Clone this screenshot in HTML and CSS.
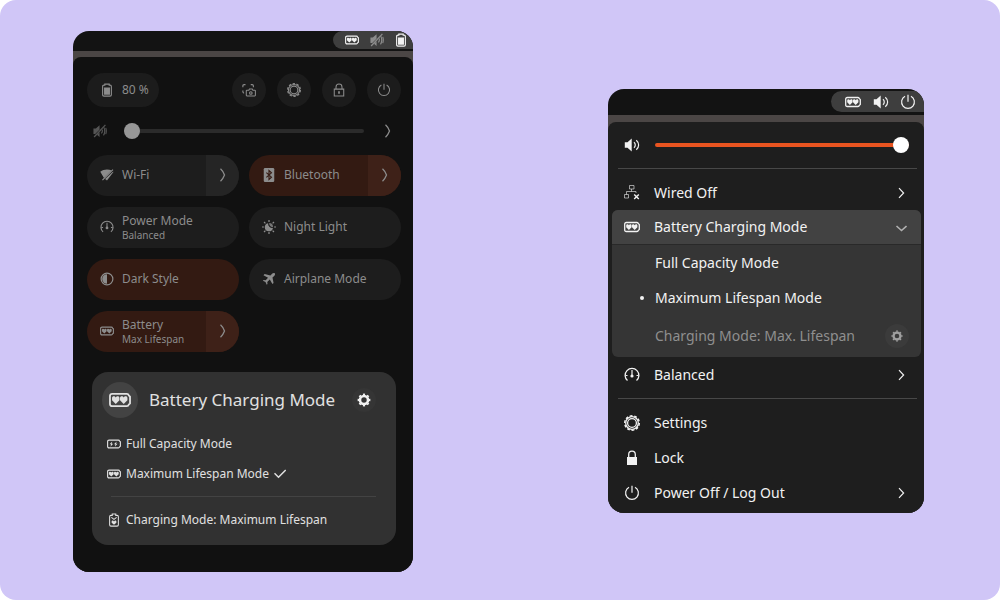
FILE: index.html
```html
<!DOCTYPE html>
<html lang="en">
<head>
<meta charset="utf-8">
<meta name="viewport" content="width=device-width, initial-scale=1">
<title>Battery Charging Mode</title>
<link rel="stylesheet" href="styles.css">
</head>
<body>
<svg class="sprite" aria-hidden="true">
  <symbol id="hearts" viewBox="0 0 16 16">
    <path d="M2.300 3.500h10.700c.9 0 1.200.5 1.400 1.200l.9.800v5l-.9.800c-.2.700-.5 1.200-1.400 1.200H2.300c-1 0-1.600-.6-1.600-1.600V5.100c0-1 .6-1.600 1.600-1.600z" fill="none" stroke="currentColor" stroke-width="1.300"/>
    <path d="M4.900 10.900 2.200 8.200V6.600c0-.8.6-1.300 1.300-1.300.6 0 1.100.4 1.400.9.3-.5.8-.9 1.400-.9.7 0 1.300.5 1.300 1.300v1.600zM10.700 10.900 8 8.200V6.600c0-.8.6-1.300 1.300-1.300.6 0 1.100.4 1.400.9.3-.5.8-.9 1.400-.9.7 0 1.300.5 1.300 1.300v1.600z" fill="currentColor"/>
  </symbol>
  <symbol id="bolts" viewBox="0 0 16 16">
    <path d="M2.300 3.500h10.700c.9 0 1.200.5 1.400 1.200l.9.800v5l-.9.800c-.2.700-.5 1.200-1.400 1.200H2.300c-1 0-1.600-.6-1.600-1.600V5.100c0-1 .6-1.600 1.600-1.600z" fill="none" stroke="currentColor" stroke-width="1.300"/>
    <path d="M6 5 3 8.400h1.700L4 11.200l3-3.600H5.300zM11 5 8 8.400h1.700L9 11.200l3-3.600h-1.700z" fill="currentColor"/>
  </symbol>
  <symbol id="battery" viewBox="0 0 16 16">
    <path d="M5.500 1.300h5v1.200h1c1 0 1.500.5 1.500 1.500v9.500c0 1-.5 1.500-1.500 1.500h-7C3.500 15 3 14.500 3 13.500V4c0-1 .5-1.500 1.500-1.500h1z" fill="none" stroke="currentColor" stroke-width="1.300"/>
    <path d="M4.600 5.200h6.800v8.200H4.600z" fill="currentColor"/>
  </symbol>
  <symbol id="battery-heart" viewBox="0 0 16 16">
    <path d="M6 1.200h4v1.500h1.500c1 0 1.500.5 1.500 1.500v9.300c0 1-.5 1.500-1.500 1.500h-7C3.500 15 3 14.500 3 13.500V4.200c0-1 .5-1.500 1.500-1.500H6z" fill="none" stroke="currentColor" stroke-width="1.200"/>
    <path d="M5 5l3 2.300L11 5" fill="none" stroke="currentColor" stroke-width="1.200"/>
    <path d="M8 13.500 5.300 11V9.800c0-.7.500-1.100 1.200-1.100.6 0 1.100.4 1.500.9.400-.5.9-.9 1.500-.9.700 0 1.200.4 1.200 1.100V11z" fill="currentColor"/>
  </symbol>
  <symbol id="volume" viewBox="0 0 16 16">
    <path d="M.8 5.300h2.700L7.700 1.600v12.800l-4.200-3.700H.8z" fill="currentColor"/>
    <path d="M10 5.300c1.700 1.500 1.700 3.900 0 5.400M12.300 3.200c3.100 2.700 3.100 6.900 0 9.600" fill="none" stroke="currentColor" stroke-width="1.200"/>
  </symbol>
  <symbol id="muted" viewBox="0 0 16 16">
    <path d="M.5 5.200h2.700l4.300-3.700v5.200L2.500 11.500H.5zM4.500 12.300l3-3v5.500z" fill="currentColor"/>
    <path d="M9.500 10.800c1.200-1.200 1.500-3 .8-4.500M12 13c1.800-2.400 1.800-6.800.3-9.300M14.600 11.500c.8-2.300.8-4.700 0-7" fill="none" stroke="currentColor" stroke-width="1.300"/>
    <path d="M14.200 1 1.300 14.800" stroke="currentColor" stroke-width="1.500"/>
  </symbol>
  <symbol id="power" viewBox="0 0 16 16">
    <path d="M5 2.300a6.400 6.400 0 1 0 6 0M8 .8v7" fill="none" stroke="currentColor" stroke-width="1.200"/>
  </symbol>
  <symbol id="gear-line" viewBox="0 0 16 16">
    <circle cx="8" cy="8" r="6.300" fill="none" stroke="currentColor" stroke-width="1.300"/>
    <circle cx="8" cy="8" r="7.300" fill="none" stroke="currentColor" stroke-width="1.400" pathLength="20" stroke-dasharray="1.200 .8"/>
    <circle cx="8" cy="8" r="4.400" fill="none" stroke="currentColor" stroke-width="1.300"/>
  </symbol>
  <symbol id="gear" viewBox="0 0 16 16">
    <circle cx="8" cy="8" r="4.600" fill="none" stroke="currentColor" stroke-width="3"/>
    <circle cx="8" cy="8" r="6.500" fill="none" stroke="currentColor" stroke-width="1.600" pathLength="16" stroke-dasharray="1 1" stroke-dashoffset=".5"/>
  </symbol>
  <symbol id="lock-line" viewBox="0 0 16 16">
    <path d="M2.600 7h10.800v7.800H2.600zM4.600 7V4.500a3.400 3.400 0 0 1 6.800 0V7" fill="none" stroke="currentColor" stroke-width="1.200"/>
    <path d="M7 9.500h2v2.700H7z" fill="currentColor"/>
  </symbol>
  <symbol id="lock" viewBox="0 0 16 16">
    <path d="M3 7h10v8H3z" fill="currentColor"/>
    <path d="M4.700 7V4.500a3.300 3.300 0 0 1 6.600 0V7" fill="none" stroke="currentColor" stroke-width="1.300"/>
  </symbol>
  <symbol id="capture" viewBox="0 0 16 16">
    <path d="M1 4.800V3.200Q1 1.800 2.400 1.800H4M10 1.800h1.600q1.400 0 1.400 1.400v1.600M1 8.500v1.600q0 1.400 1.400 1.400" fill="none" stroke="currentColor" stroke-width="1.300"/>
    <path d="M5.600 8.200h2.200l.7-1.400h3.200l.7 1.400h2.200q.7 0 .7.700v5.200q0 .7-.7.700h-9q-.7 0-.7-.7V8.900q0-.7.700-.7z" fill="none" stroke="currentColor" stroke-width="1.200"/>
    <circle cx="10.100" cy="11.400" r="1.500" fill="none" stroke="currentColor" stroke-width="1.200"/>
  </symbol>
  <symbol id="wifi-off" viewBox="0 0 16 16">
    <path d="M.3 4.200C4 1.200 9.500 1 13 2.700L4.400 11.200zM14.300 4.500l1.300-.2L8 14.300 5.800 12.600zM2.300 13.400 14.300 1.400l1 1L3.300 14.400z" fill="currentColor"/>
  </symbol>
  <symbol id="bluetooth" viewBox="0 0 16 16">
    <rect x="2" y="0" width="12" height="16" rx="1.500" fill="currentColor"/>
    <path d="m5 5.300 5.800 5.200L8 13V3l2.800 2.500L5 10.700" fill="none" stroke="#351b13" stroke-width="1.300"/>
  </symbol>
  <symbol id="gauge" viewBox="0 0 16 16">
    <path d="M3.500 13.600a6.900 6.900 0 1 1 9 0" fill="none" stroke="currentColor" stroke-width="1.300"/>
    <path d="M1.500 8.500h2M12.500 8.500h2M8 3v5" fill="none" stroke="currentColor" stroke-width="1.200"/>
    <circle cx="8" cy="9" r="1.600" fill="currentColor"/>
  </symbol>
  <symbol id="night" viewBox="0 0 16 16">
    <path d="M7 3.600A4.700 4.700 0 1 0 12.500 9 4.800 4.800 0 0 1 7 3.600z" fill="currentColor"/>
    <path d="M8.200 3.500a4.600 4.600 0 0 1 4.400 4.600c-2.500.4-4.800-2-4.400-4.600z" fill="currentColor" opacity=".8"/>
    <path d="M8 0v2.200M8 13.800V16M0 8h2.200M13.800 8H16M2.300 2.300l1.600 1.600M12.100 12.100l1.600 1.600M2.300 13.700l1.600-1.600M12.100 3.900l1.600-1.600" stroke="currentColor" stroke-width="1.400"/>
  </symbol>
  <symbol id="contrast" viewBox="0 0 16 16">
    <circle cx="8" cy="8" r="6.700" fill="none" stroke="currentColor" stroke-width="1.400"/>
    <path d="M8 2.500a5.500 5.500 0 0 0 0 11z" fill="currentColor"/>
  </symbol>
  <symbol id="plane" viewBox="0 0 16 16">
    <path d="M14.500 1.500c-.8-.8-2-.4-2.700.3L9.600 4 3 2.300 1.700 3.600l5.200 3-2.700 2.900-2.300-.3-.9.900 3 1.400 1.400 3 .9-.9-.3-2.300 2.900-2.700 3 5.200 1.300-1.300L12 6.400l2.200-2.200c.7-.7 1.100-1.900.3-2.700z" fill="currentColor"/>
  </symbol>
  <symbol id="wired-off" viewBox="0 0 16 16">
    <path d="M5.500.5h4.500v3.500H5.500zM.5 9.500h4v3.500h-4zM7.500 4v2.500M2.500 9.500v-3h9.500v1.500" fill="none" stroke="currentColor" opacity=".6"/>
    <path d="m10.200 9.400 4.600 4.600M14.800 9.400 10.200 14" stroke="currentColor" stroke-width="1.400"/>
  </symbol>
  <symbol id="chevron" viewBox="0 0 12 12">
    <path d="M4 1.200 8.600 6 4 10.800" fill="none" stroke="currentColor" stroke-width="1.200"/>
  </symbol>
  <symbol id="chevron-tall" viewBox="0 0 8 14">
    <path d="M1.500.8Q4 3 5.500 7 4 11 1.500 13.200" fill="none" stroke="currentColor" stroke-width="1.300"/>
  </symbol>
  <symbol id="chevron-down" viewBox="0 0 12 12">
    <path d="M1.500 5 6.500 9.500l5-4.500" fill="none" stroke="currentColor" stroke-width="1.600"/>
  </symbol>
  <symbol id="check" viewBox="0 0 12 12">
    <path d="m.5 5.300 4 4 7.200-7.400" fill="none" stroke="currentColor" stroke-width="1.500"/>
  </symbol>
</svg>

<main class="stage">
  <section class="device quick" aria-label="Quick settings">
    <header class="topbar">
      <div class="status">
        <svg class="icon"><use href="#hearts"/></svg>
        <svg class="icon faint"><use href="#muted"/></svg>
        <svg class="icon"><use href="#battery"/></svg>
      </div>
    </header>
    <div class="backdrop">
      <div class="panel">
        <div class="system">
          <button class="charge" type="button"><svg class="icon"><use href="#battery"/></svg>80 %</button>
          <div class="actions">
            <button class="round" type="button" aria-label="Screenshot"><svg class="icon"><use href="#capture"/></svg></button>
            <button class="round" type="button" aria-label="Settings"><svg class="icon"><use href="#gear-line"/></svg></button>
            <button class="round" type="button" aria-label="Lock"><svg class="icon"><use href="#lock-line"/></svg></button>
            <button class="round" type="button" aria-label="Power"><svg class="icon"><use href="#power"/></svg></button>
          </div>
        </div>
        <div class="volume">
          <svg class="icon"><use href="#muted"/></svg>
          <input class="slider" type="range" min="0" max="100" value="0" aria-label="Volume">
          <button class="plain" type="button" aria-label="Sound output"><svg class="tall"><use href="#chevron-tall"/></svg></button>
        </div>
        <div class="tiles">
          <div class="tile">
            <button class="toggle" type="button"><svg class="icon"><use href="#wifi-off"/></svg><span class="label">Wi-Fi</span></button>
            <button class="more" type="button" aria-label="Wi-Fi menu"><svg class="tall"><use href="#chevron-tall"/></svg></button>
          </div>
          <div class="tile active">
            <button class="toggle" type="button"><svg class="icon"><use href="#bluetooth"/></svg><span class="label">Bluetooth</span></button>
            <button class="more" type="button" aria-label="Bluetooth menu"><svg class="tall"><use href="#chevron-tall"/></svg></button>
          </div>
          <div class="tile">
            <button class="toggle" type="button"><svg class="icon"><use href="#gauge"/></svg><span class="label">Power Mode<small>Balanced</small></span></button>
          </div>
          <div class="tile">
            <button class="toggle" type="button"><svg class="icon"><use href="#night"/></svg><span class="label">Night Light</span></button>
          </div>
          <div class="tile active">
            <button class="toggle" type="button"><svg class="icon"><use href="#contrast"/></svg><span class="label">Dark Style</span></button>
          </div>
          <div class="tile">
            <button class="toggle" type="button"><svg class="icon"><use href="#plane"/></svg><span class="label">Airplane Mode</span></button>
          </div>
          <div class="tile active">
            <button class="toggle" type="button"><svg class="icon"><use href="#hearts"/></svg><span class="label">Battery<small>Max Lifespan</small></span></button>
            <button class="more" type="button" aria-label="Battery menu"><svg class="tall"><use href="#chevron-tall"/></svg></button>
          </div>
        </div>
        <div class="card">
          <div class="card-head">
            <span class="badge"><svg><use href="#hearts"/></svg></span>
            <h2>Battery Charging Mode</h2>
            <button class="config" type="button" aria-label="Preferences"><svg><use href="#gear"/></svg></button>
          </div>
          <div class="choices">
            <button class="choice" type="button"><svg class="icon"><use href="#bolts"/></svg>Full Capacity Mode</button>
            <button class="choice" type="button"><svg class="icon"><use href="#hearts"/></svg>Maximum Lifespan Mode<svg class="check"><use href="#check"/></svg></button>
          </div>
          <hr>
          <p class="choice"><svg class="icon"><use href="#battery-heart"/></svg>Charging Mode: Maximum Lifespan</p>
        </div>
      </div>
    </div>
  </section>

  <section class="device menu" aria-label="System menu">
    <header class="topbar">
      <div class="status">
        <svg class="icon"><use href="#hearts"/></svg>
        <svg class="icon"><use href="#volume"/></svg>
        <svg class="icon"><use href="#power"/></svg>
      </div>
    </header>
    <div class="backdrop">
      <div class="panel">
        <div class="volume">
          <svg class="icon"><use href="#volume"/></svg>
          <input class="slider" type="range" min="0" max="100" value="100" aria-label="Volume">
        </div>
        <hr>
        <button class="row" type="button"><svg class="icon"><use href="#wired-off"/></svg><span>Wired Off</span><svg class="arrow"><use href="#chevron"/></svg></button>
        <div class="group">
          <button class="row open" type="button" aria-expanded="true"><svg class="icon"><use href="#hearts"/></svg><span>Battery Charging Mode</span><svg class="arrow"><use href="#chevron-down"/></svg></button>
          <button class="option" type="button"><i class="dot"></i>Full Capacity Mode</button>
          <button class="option selected" type="button"><i class="dot"></i>Maximum Lifespan Mode</button>
          <div class="option info"><i class="dot"></i><span>Charging Mode: Max. Lifespan</span>
            <button class="config" type="button" aria-label="Preferences"><svg><use href="#gear"/></svg></button>
          </div>
        </div>
        <button class="row" type="button"><svg class="icon"><use href="#gauge"/></svg><span>Balanced</span><svg class="arrow"><use href="#chevron"/></svg></button>
        <hr>
        <button class="row" type="button"><svg class="icon"><use href="#gear-line"/></svg><span>Settings</span></button>
        <button class="row" type="button"><svg class="icon"><use href="#lock"/></svg><span>Lock</span></button>
        <button class="row" type="button"><svg class="icon"><use href="#power"/></svg><span>Power Off / Log Out</span><svg class="arrow"><use href="#chevron"/></svg></button>
      </div>
    </div>
  </section>
</main>
</body>
</html>
```

FILE: styles.css
```css
* { box-sizing: border-box; }

body {
  margin: 0;
  background: #fff;
  font-family: "Noto Sans", "Open Sans", sans-serif;
}

button {
  display: flex;
  align-items: center;
  margin: 0;
  padding: 0;
  border: 0;
  background: none;
  color: inherit;
  font: inherit;
  text-align: left;
  white-space: nowrap;
  cursor: pointer;
}

svg { display: block; flex: none; }

.sprite { position: absolute; width: 0; height: 0; }

.stage {
  display: flex;
  flex-wrap: wrap;
  align-items: center;
  justify-content: space-between;
  gap: 24px;
  min-height: 100vh;
  padding: 24px 76px 22px 73px;
  border-radius: 16px;
  background: #d0c6f7;
}

.device {
  overflow: hidden;
  border-radius: 16px;
  background: #131313;
}

.topbar { display: flex; justify-content: flex-end; }

.status {
  display: flex;
  align-items: center;
  justify-content: space-between;
  background: #3e3e3e;
  color: #f2f2f2;
}

.backdrop { background: #4b4645; }

.panel { border-radius: 8px 8px 0 0; }

hr { height: 1px; border: 0; background: #484848; }

.volume { display: flex; align-items: center; }

.slider {
  appearance: none;
  flex: 1;
  min-width: 0;
  height: 16px;
  margin: 0;
  background: none;
}

.slider::-webkit-slider-runnable-track {
  height: 4px;
  border-radius: 2px;
  background: var(--track);
}

.slider::-webkit-slider-thumb {
  appearance: none;
  width: 16px;
  height: 16px;
  margin-top: -6px;
  border-radius: 50%;
  background: var(--thumb);
}

.config {
  justify-content: center;
  width: 24px;
  height: 24px;
  border-radius: 50%;
}

.config svg { width: 12px; height: 12px; }

/* Quick settings */

.quick { width: 340px; color: #8c8c8c; font-size: 12px; line-height: 16px; }
.quick .icon { width: 14px; height: 14px; }
.quick .topbar { height: 20px; }

.quick .status {
  width: 80px;
  height: 18px;
  padding: 0 5px 0 12px;
  border-radius: 9px 0 0 9px;
}

.quick .faint { color: #8c8c8c; }
.quick .backdrop { padding-top: 6px; }
.quick .panel { padding: 16px 12px 27px 14px; background: #111; }

.system { display: flex; justify-content: space-between; }

.charge {
  gap: 8px;
  height: 34px;
  padding: 0 10px 0 13px;
  border-radius: 17px;
  background: #1c1c1c;
}

.actions { display: flex; gap: 11px; }

.round {
  justify-content: center;
  width: 34px;
  height: 34px;
  border-radius: 50%;
  background: #1c1c1c;
}

.quick .volume {
  --track: #2b2b2b;
  --thumb: #969696;
  height: 48px;
  padding: 0 9px 0 6px;
}

.quick .volume .icon { margin-right: 17px; color: #555; }

.tall { width: 8px; height: 14px; }
.plain { margin-left: 20px; }

.tiles {
  display: grid;
  grid-template-columns: 1fr 1fr;
  grid-auto-rows: 41px;
  gap: 11px 10px;
}

.tile {
  display: flex;
  overflow: hidden;
  border-radius: 21px;
  background: #1d1d1d;
}

.toggle { flex: 1; gap: 8px; padding-left: 13px; }
.label small { display: block; font-size: 10px; line-height: 12px; }
.more { justify-content: center; width: 33px; background: #252525; }
.active { background: #331a12; }
.active .more { background: #3e2118; }

.card {
  margin: 20px 5px 0;
  padding: 10px 0;
  border-radius: 16px;
  background: #313131;
  color: #e0e0e0;
}

.card-head { display: flex; align-items: center; padding: 0 20px 0 10px; }

.badge {
  display: grid;
  place-items: center;
  width: 36px;
  height: 36px;
  border-radius: 50%;
  background: #434343;
}

.badge svg { width: 22px; height: 22px; }

.card h2 {
  flex: 1;
  margin: 0 0 0 11px;
  font-size: 17px;
  font-weight: 400;
  line-height: 24px;
  white-space: nowrap;
}

.card .config { background: #353535; color: #f2f2f2; }
.card .config svg { width: 14px; height: 14px; }
.choices { margin-top: 11px; }

.choice {
  display: flex;
  align-items: center;
  gap: 5px;
  width: 100%;
  height: 30px;
  margin: 0;
  padding-left: 15px;
}

.check { width: 12px; height: 12px; }
.card hr { margin: 7px 20px 8px 19px; background: #434343; }

/* System menu */

.menu { width: 316px; color: #f2f2f2; font-size: 14px; line-height: 20px; }
.menu .icon { width: 16px; height: 16px; }
.menu .topbar { height: 26px; padding-top: 2px; }

.menu .status {
  width: 93px;
  height: 21px;
  padding: 0 8px 0 14px;
  border-radius: 11px 0 0 11px;
}

.menu .backdrop { padding-top: 7px; }
.menu .panel { padding: 0 3px 3px 4px; background: #1e1e1e; }

.menu .volume {
  --track: #e95420;
  --thumb: #fff;
  gap: 15px;
  height: 46px;
  padding: 0 12px;
}

.menu hr { margin: 0 4px 6px 6px; }

.row { gap: 14px; width: 100%; height: 35px; padding: 0 14px 0 12px; }
.row span, .info span { flex: 1; }
.row + hr { margin-top: 6px; }
.arrow { width: 12px; height: 12px; }

.group { overflow: hidden; border-radius: 6px; background: #353535; }
.open { border-bottom: 1px solid #292929; background: #424242; }
.open .arrow { color: #b0b0b0; }

.option {
  display: flex;
  align-items: center;
  gap: 11px;
  width: 100%;
  height: 35px;
  padding: 0 12px 0 28px;
}

.dot { width: 4px; height: 4px; border-radius: 50%; }
.selected .dot { background: #f2f2f2; }
.info { height: 42px; color: #8f8f8f; }
.info .config { background: #3b3b3b; color: #a0a0a0; }
```
